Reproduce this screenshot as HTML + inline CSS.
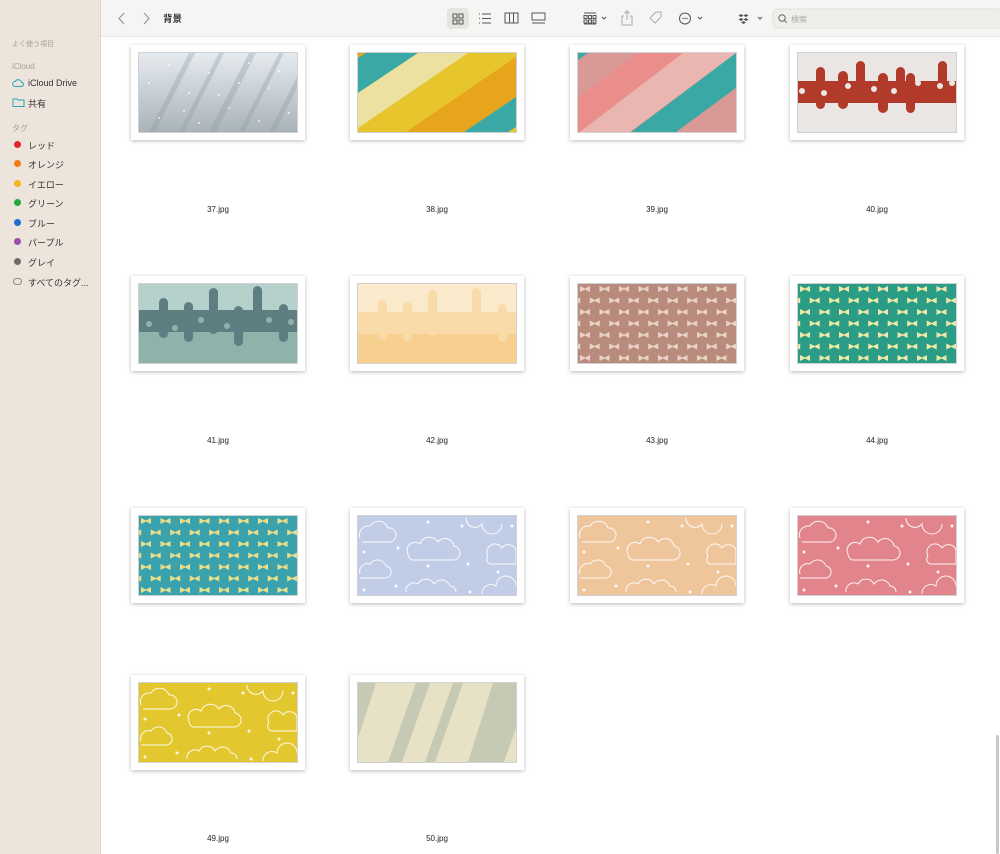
<!DOCTYPE html>
<html><head><meta charset="utf-8"><style>
*{margin:0;padding:0;box-sizing:border-box}
body{width:1000px;height:854px;overflow:hidden;background:#fff;font-family:"Liberation Sans","Noto Sans CJK JP",sans-serif;position:relative}
#side{position:absolute;left:0;top:0;width:101px;height:854px;background:#ede4dc;border-right:1px solid #ddd3ca}
.sh{position:absolute;left:12px;font-size:8px;color:#a89f98}
.si{position:absolute;left:28px;font-size:9px;color:#333}
.dot{position:absolute;left:14px;width:7px;height:7px;border-radius:50%}
#tb{position:absolute;left:101px;top:0;width:899px;height:37px;background:#f6f5f3;border-bottom:1px solid #e8e6e3}
.card{position:absolute;width:174px;height:95px;background:#fff;box-shadow:0 1px 4px rgba(0,0,0,.28)}
.card svg{position:absolute;left:8px;top:8px;width:158px;height:79px;outline:1px solid rgba(0,0,0,.18)}
.lb{position:absolute;width:174px;text-align:center;font-size:8px;color:#222}
</style></head><body>
<svg width="0" height="0" style="position:absolute">
<defs>
<linearGradient id="g37" x1="0" y1="0" x2="0" y2="1"><stop offset="0" stop-color="#e6ebef"/><stop offset="1" stop-color="#a9b3ba"/></linearGradient>
<pattern id="bow1" width="19.5" height="23" patternUnits="userSpaceOnUse"><path d="M2 2l5 2.5 5-2.5v6l-5-2.5-5 2.5z" fill="#f0e9a6"/><path d="M11.7 13.5l5 2.5 5-2.5v6l-5-2.5-5 2.5zM-7.8 13.5l5 2.5 5-2.5v6l-5-2.5-5 2.5z" fill="#f0e9a6"/></pattern>
<pattern id="bow2" width="19.5" height="23" patternUnits="userSpaceOnUse"><path d="M2 2l5 2.5 5-2.5v6l-5-2.5-5 2.5z" fill="#eadf88"/><path d="M11.7 13.5l5 2.5 5-2.5v6l-5-2.5-5 2.5zM-7.8 13.5l5 2.5 5-2.5v6l-5-2.5-5 2.5z" fill="#eadf88"/></pattern>
<pattern id="bow3" width="19.5" height="23" patternUnits="userSpaceOnUse"><path d="M2 2l5 2.5 5-2.5v6l-5-2.5-5 2.5z" fill="#ead2c8"/><path d="M11.7 13.5l5 2.5 5-2.5v6l-5-2.5-5 2.5zM-7.8 13.5l5 2.5 5-2.5v6l-5-2.5-5 2.5z" fill="#ead2c8"/></pattern>
<g id="clouds" fill="none" stroke="#fff" stroke-width="1" opacity=".9">
<path d="M2 22a9 9 0 0 1 10-12a10 10 0 0 1 18 2a7 7 0 0 1 2 14h-28"/>
<path d="M50 38a8 8 0 0 1 12-10a10 10 0 0 1 18-2a9 9 0 0 1 16 4a7 7 0 0 1 -2 14h-40a7 7 0 0 1 -4-6"/>
<path d="M2 58a8 8 0 0 1 10-10a9 9 0 0 1 16 2a6 6 0 0 1 -2 12h-24"/>
<path d="M48 76a8 8 0 0 1 12-8a9 9 0 0 1 16 0a9 9 0 0 1 16 2a6 6 0 0 1 6 6"/>
<path d="M108 2a9 9 0 0 0 16 6a9 9 0 0 0 20 0"/>
<path d="M130 40a8 8 0 0 1 14-8a8 8 0 0 1 14 2v14h-26a5 5 0 0 1 -2-8"/>
<path d="M124 78a9 9 0 0 1 14-8a8 8 0 0 1 20 0"/>
<g fill="#fff" stroke="none"><circle cx="70" cy="6" r="1.5"/><circle cx="104" cy="10" r="1.5"/><circle cx="40" cy="32" r="1.5"/><circle cx="6" cy="36" r="1.5"/><circle cx="70" cy="50" r="1.5"/><circle cx="110" cy="48" r="1.5"/><circle cx="140" cy="56" r="1.5"/><circle cx="38" cy="70" r="1.5"/><circle cx="6" cy="74" r="1.5"/><circle cx="112" cy="76" r="1.5"/><circle cx="154" cy="10" r="1.5"/></g>
</g>
</defs></svg>

<div id="side">
<div style="position:absolute;left:0;top:0;width:101px;height:37px"></div>
<div class="sh" style="top:39px;font-size:7px">よく使う項目</div>
<div class="sh" style="top:62px">iCloud</div>
<svg style="position:absolute;left:12px;top:78px" width="12" height="9" viewBox="0 0 12 9"><path d="M3 8.5h6.5a2 2 0 0 0 0-4a3.3 3.3 0 0 0-6.2-1a2.5 2.5 0 0 0-.3 5z" fill="none" stroke="#2aa6b8" stroke-width="1"/></svg>
<div class="si" style="top:78px">iCloud Drive</div>
<svg style="position:absolute;left:12px;top:97px" width="13" height="10" viewBox="0 0 13 10"><path d="M1 2h4l1 1h6v6.5h-11z" fill="none" stroke="#2aa6b8" stroke-width="1"/></svg>
<div class="si" style="top:97px">共有</div>
<div class="sh" style="top:123px">タグ</div>
<div class="dot" style="top:141px;background:#e3262b"></div><div class="si" style="top:139px">レッド</div>
<div class="dot" style="top:160px;background:#ef7d14"></div><div class="si" style="top:158px">オレンジ</div>
<div class="dot" style="top:180px;background:#f6b31a"></div><div class="si" style="top:178px">イエロー</div>
<div class="dot" style="top:199px;background:#23a73f"></div><div class="si" style="top:197px">グリーン</div>
<div class="dot" style="top:219px;background:#1a6fd1"></div><div class="si" style="top:217px">ブルー</div>
<div class="dot" style="top:238px;background:#9a4fae"></div><div class="si" style="top:236px">パープル</div>
<div class="dot" style="top:258px;background:#6e6b6a"></div><div class="si" style="top:256px">グレイ</div>
<div style="position:absolute;left:13px;top:278px;width:9px;height:7px;border:1px solid #888;border-radius:4px"></div><div class="si" style="top:276px">すべてのタグ...</div>
</div>

<div id="tb">
<svg style="position:absolute;left:0;top:0" width="899" height="37">
<g fill="none" stroke="#9a9896" stroke-width="1.2"><path d="M23 13l-5 5.5 5 5.5"/><path d="M43 13l5 5.5-5 5.5"/></g>
<text x="62" y="22" font-size="9.5" fill="#333" font-family="Liberation Sans,Noto Sans CJK JP,sans-serif" font-weight="bold">背景</text>
<rect x="346" y="8" width="22" height="21" rx="4" fill="#e6e4e1"/>
<g fill="none" stroke="#555" stroke-width="1"><rect x="352" y="14" width="4" height="4"/><rect x="358" y="14" width="4" height="4"/><rect x="352" y="20" width="4" height="4"/><rect x="358" y="20" width="4" height="4"/>
<path d="M381 14h9M381 18.5h9M381 23h9M378 14h1M378 18.5h1M378 23h1"/>
<rect x="404" y="13" width="13" height="10"/><path d="M408.5 13v10M412.5 13v10"/>
<rect x="431" y="13" width="13" height="7"/><path d="M431 23h13"/>
<path d="M483 13h12M483 24h12"/><rect x="483" y="15.5" width="3" height="3"/><rect x="487.5" y="15.5" width="3" height="3"/><rect x="492" y="15.5" width="3" height="3"/><rect x="483" y="20" width="3" height="3"/><rect x="487.5" y="20" width="3" height="3"/><rect x="492" y="20" width="3" height="3"/>
<path d="M501 17l2 2 2-2"/>
</g>
<g fill="none" stroke="#aaa" stroke-width="1"><path d="M523 16h-2v9h10v-9h-2M526 20v-9M523.5 13.5l2.5-2.5 2.5 2.5"/><path d="M549 18l6-6h5v5l-6 6z"/></g>
<g fill="none" stroke="#555" stroke-width="1"><circle cx="584" cy="18.5" r="5.5"/><path d="M597 17l2 2 2-2M657 17l2 2 2-2"/></g>
<g fill="#555"><circle cx="582" cy="18.5" r=".7"/><circle cx="584" cy="18.5" r=".7"/><circle cx="586" cy="18.5" r=".7"/>
<path d="M640 14l2.5 1.5-2.5 1.5-2.5-1.5zM645 14l2.5 1.5-2.5 1.5-2.5-1.5zM640 18l2.5 1.5-2.5 1.5-2.5-1.5zM645 18l2.5 1.5-2.5 1.5-2.5-1.5zM642.5 21l2.5 1.5-2.5 1.5-2.5-1.5z"/></g>
<rect x="672" y="9" width="230" height="19" rx="5" fill="#efeeeb" stroke="#e3e1de"/>
<circle cx="681" cy="18" r="3.2" fill="none" stroke="#666" stroke-width="1"/><path d="M683.3 20.3l2.5 2.5" stroke="#666" stroke-width="1"/>
<text x="690" y="22" font-size="8" fill="#aaa" font-family="Liberation Sans,Noto Sans CJK JP,sans-serif">検索</text>
</svg>
</div>

<!-- Row 1 -->
<div class="card" style="left:131px;top:45px"><svg viewBox="0 0 158 79"><rect width="158" height="79" fill="url(#g37)"/><g fill="#8f9aa2" opacity=".35"><path d="M10 79l40-79h6l-40 79zM40 79l40-79h5l-40 79zM70 79l40-79h7l-40 79zM100 79l40-79h5l-40 79zM130 79l40-79h6l-40 79z"/></g><g fill="#fff"><circle cx="10" cy="30" r=".9"/><circle cx="30" cy="12" r=".9"/><circle cx="50" cy="40" r=".9"/><circle cx="70" cy="20" r=".9"/><circle cx="90" cy="55" r=".9"/><circle cx="110" cy="10" r=".9"/><circle cx="130" cy="35" r=".9"/><circle cx="150" cy="60" r=".9"/><circle cx="20" cy="65" r=".9"/><circle cx="60" cy="70" r=".9"/><circle cx="100" cy="30" r=".9"/><circle cx="140" cy="18" r=".9"/><circle cx="80" cy="42" r=".9"/><circle cx="45" cy="58" r=".9"/><circle cx="120" cy="68" r=".9"/></g></svg></div>
<div class="card" style="left:350px;top:45px"><svg viewBox="0 0 158 79"><rect width="158" height="79" fill="#e6c62c"/><path d="M0 0h60l-60 40z" fill="#3aa8a5"/><path d="M0 0h8l-8 5z" fill="#e6a51c"/><path d="M60 0h50l-110 75v-35z" fill="#ece1a0"/><path d="M110 0h48v4l-114 75h-44z" fill="#e6c62c"/><path d="M158 4v40l-52 35h-58z" fill="#e6a51c"/><path d="M158 44v30l-8 5h-44z" fill="#3aa8a5"/></svg></div>
<div class="card" style="left:570px;top:45px"><svg viewBox="0 0 158 79"><rect width="158" height="79" fill="#e98e8a"/><path d="M0 0h60l-60 45z" fill="#d99a97"/><path d="M0 0h10l-10 7z" fill="#3aa8a5"/><path d="M105 0h53l-106 79h-50z" fill="#eab6b1"/><path d="M158 0v35l-60 44h-45z" fill="#3aa8a5"/><path d="M158 35v44h-59z" fill="#d99a97"/></svg></div>
<div class="card" style="left:790px;top:45px"><svg viewBox="0 0 158 79"><rect width="158" height="79" fill="#e9e6e3"/><g fill="#b13a2a"><rect x="0" y="28" width="158" height="22"/><rect x="18" y="14" width="9" height="42" rx="4.5"/><rect x="58" y="8" width="9" height="40" rx="4.5"/><rect x="98" y="14" width="9" height="36" rx="4.5"/><rect x="108" y="20" width="9" height="40" rx="4.5"/><rect x="140" y="8" width="9" height="36" rx="4.5"/><rect x="80" y="20" width="10" height="40" rx="5"/><rect x="40" y="18" width="10" height="38" rx="5"/></g><g fill="#e9e6e3"><circle cx="4" cy="38" r="3"/><circle cx="26" cy="40" r="3"/><circle cx="50" cy="33" r="3"/><circle cx="76" cy="36" r="3"/><circle cx="96" cy="38" r="3"/><circle cx="120" cy="30" r="3"/><circle cx="142" cy="33" r="3"/><circle cx="154" cy="30" r="3"/></g></svg></div>
<div class="lb" style="left:131px;top:205px">37.jpg</div><div class="lb" style="left:350px;top:205px">38.jpg</div><div class="lb" style="left:570px;top:205px">39.jpg</div><div class="lb" style="left:790px;top:205px">40.jpg</div>

<!-- Row 2 -->
<div class="card" style="left:131px;top:276px"><svg viewBox="0 0 158 79"><rect width="158" height="79" fill="#b6d0cb"/><rect y="48" width="158" height="31" fill="#8db3ab"/><g fill="#5f7e82"><rect x="0" y="26" width="158" height="22"/><rect x="20" y="14" width="9" height="40" rx="4.5"/><rect x="70" y="4" width="9" height="46" rx="4.5"/><rect x="95" y="22" width="9" height="40" rx="4.5"/><rect x="114" y="2" width="9" height="46" rx="4.5"/><rect x="45" y="18" width="9" height="40" rx="4.5"/><rect x="140" y="20" width="9" height="38" rx="4.5"/></g><g fill="#8db3ab"><circle cx="10" cy="40" r="3"/><circle cx="36" cy="44" r="3"/><circle cx="62" cy="36" r="3"/><circle cx="88" cy="42" r="3"/><circle cx="130" cy="36" r="3"/><circle cx="152" cy="38" r="3"/></g></svg></div>
<div class="card" style="left:350px;top:276px"><svg viewBox="0 0 158 79"><rect width="158" height="79" fill="#fbe9cc"/><rect y="50" width="158" height="29" fill="#f7cf8e"/><g fill="#f8dba8"><rect x="0" y="28" width="158" height="22"/><rect x="20" y="16" width="9" height="40" rx="4.5"/><rect x="70" y="6" width="9" height="46" rx="4.5"/><rect x="114" y="4" width="9" height="46" rx="4.5"/><rect x="45" y="18" width="9" height="40" rx="4.5"/><rect x="140" y="20" width="9" height="38" rx="4.5"/></g></svg></div>
<div class="card" style="left:570px;top:276px"><svg viewBox="0 0 158 79"><rect width="158" height="79" fill="#b98b7d"/><rect width="158" height="79" fill="url(#bow3)"/></svg></div>
<div class="card" style="left:790px;top:276px"><svg viewBox="0 0 158 79"><rect width="158" height="79" fill="#2b9c86"/><rect width="158" height="79" fill="url(#bow1)"/></svg></div>
<div class="lb" style="left:131px;top:436px">41.jpg</div><div class="lb" style="left:350px;top:436px">42.jpg</div><div class="lb" style="left:570px;top:436px">43.jpg</div><div class="lb" style="left:790px;top:436px">44.jpg</div>

<!-- Row 3 -->
<div class="card" style="left:131px;top:508px"><svg viewBox="0 0 158 79"><rect width="158" height="79" fill="#3aa2ac"/><rect width="158" height="79" fill="url(#bow2)"/></svg></div>
<div class="card" style="left:350px;top:508px"><svg viewBox="0 0 158 79"><rect width="158" height="79" fill="#c1cde6"/><use href="#clouds"/></svg></div>
<div class="card" style="left:570px;top:508px"><svg viewBox="0 0 158 79"><rect width="158" height="79" fill="#efc59b"/><use href="#clouds"/></svg></div>
<div class="card" style="left:790px;top:508px"><svg viewBox="0 0 158 79"><rect width="158" height="79" fill="#e2848b"/><use href="#clouds"/></svg></div>

<!-- Row 4 -->
<div class="card" style="left:131px;top:675px"><svg viewBox="0 0 158 79"><rect width="158" height="79" fill="#e3c72f"/><use href="#clouds"/></svg></div>
<div class="card" style="left:350px;top:675px"><svg viewBox="0 0 158 79"><rect width="158" height="79" fill="#e7e2c5"/><g fill="#c6c9b4"><path d="M0 0h18l-18 55z"/><path d="M58 0h14l-28 79h-14z"/><path d="M95 0h10l-28 79h-10z"/><path d="M135 0h23v45l-12 34h-36z"/></g></svg></div>
<div class="lb" style="left:131px;top:834px">49.jpg</div><div class="lb" style="left:350px;top:834px">50.jpg</div>

<div style="position:absolute;left:996px;top:735px;width:3px;height:119px;background:#c8c8c8;border-radius:2px"></div>
</body></html>
